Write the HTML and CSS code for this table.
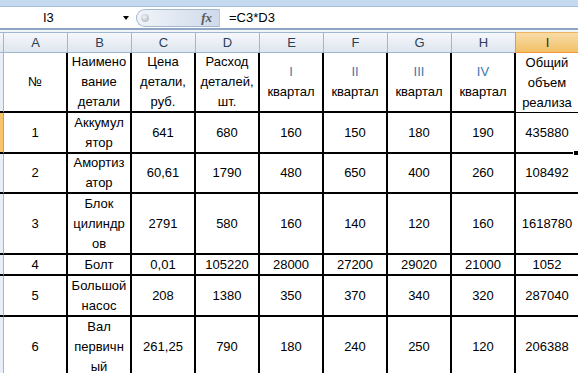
FILE: index.html
```
<!DOCTYPE html>
<html lang="ru">
<head>
<meta charset="utf-8">
<title>Excel</title>
<link rel="stylesheet" href="styles.css">
</head>
<body>
<div class="topband"></div>
<div class="fbar">
  <div class="namebox"><span class="nb-text">I3</span><span class="nb-arrow"></span></div>
  <div class="fx-cap"><span class="fx-dot"></span><span class="fx-label">fx</span></div>
  <div class="formula">=C3*D3</div>
</div>
<div class="fsep"></div>
<div class="gap"></div>
<div class="grid">
  <div class="ch corner"></div>
  <div class="ch">A</div><div class="ch">B</div><div class="ch">C</div><div class="ch">D</div><div class="ch">E</div><div class="ch">F</div><div class="ch">G</div><div class="ch presel">H</div><div class="ch sel">I</div>

  <div class="rh"></div>
  <div class="c">№</div>
  <div class="c">Наимено<br>вание<br>детали</div>
  <div class="c">Цена<br>детали,<br>руб.</div>
  <div class="c">Расход<br>деталей,<br>шт.</div>
  <div class="c"><span><span class="rn">I</span><br>квартал</span></div>
  <div class="c"><span><span class="rn">II</span><br>квартал</span></div>
  <div class="c"><span><span class="rn">III</span><br>квартал</span></div>
  <div class="c"><span><span class="rn">IV</span><br>квартал</span></div>
  <div class="c i2">Общий<br>объем<br>реализа</div>

  <div class="rh sel"></div>
  <div class="c">1</div><div class="c">Аккумул<br>ятор</div><div class="c">641</div><div class="c">680</div><div class="c">160</div><div class="c">150</div><div class="c">180</div><div class="c">190</div><div class="c i3">435880<span class="handle"></span></div>

  <div class="rh"></div>
  <div class="c">2</div><div class="c">Амортиз<br>атор</div><div class="c">60,61</div><div class="c">1790</div><div class="c">480</div><div class="c">650</div><div class="c">400</div><div class="c">260</div><div class="c">108492</div>

  <div class="rh"></div>
  <div class="c">3</div><div class="c">Блок<br>цилиндр<br>ов</div><div class="c">2791</div><div class="c">580</div><div class="c">160</div><div class="c">140</div><div class="c">120</div><div class="c">160</div><div class="c">1618780</div>

  <div class="rh"></div>
  <div class="c">4</div><div class="c">Болт</div><div class="c">0,01</div><div class="c">105220</div><div class="c">28000</div><div class="c">27200</div><div class="c">29020</div><div class="c">21000</div><div class="c">1052</div>

  <div class="rh"></div>
  <div class="c">5</div><div class="c">Большой<br>насос</div><div class="c">208</div><div class="c">1380</div><div class="c">350</div><div class="c">370</div><div class="c">340</div><div class="c">320</div><div class="c">287040</div>

  <div class="rh"></div>
  <div class="c">6</div><div class="c">Вал<br>первичн<br>ый</div><div class="c">261,25</div><div class="c">790</div><div class="c">180</div><div class="c">240</div><div class="c">250</div><div class="c">120</div><div class="c">206388</div>
</div>
</body>
</html>
```

FILE: styles.css
```
* { box-sizing: border-box; margin: 0; padding: 0; }
html, body { width: 578px; height: 373px; overflow: hidden; background: #fff; }
body { font-family: "Liberation Sans", Arial, sans-serif; font-size: 13px; color: #000; }

.topband { height: 7px; background: #c5d9f1; border-bottom: 1px solid #a8bdd6; }

.fbar { height: 21px; display: flex; align-items: center; background: #fff; }
.namebox { width: 136px; height: 100%; display: flex; align-items: center; }
.nb-text { margin-left: 43px; }
.nb-arrow { margin-left: auto; margin-right: 7px; width: 0; height: 0;
  border-left: 3.5px solid transparent; border-right: 3.5px solid transparent; border-top: 4px solid #000; }
.fx-cap { width: 84px; height: 18px; border: 1px solid #a3b7cf; border-right-color: #b7c6d9;
  border-radius: 9px 0 0 9px; background: linear-gradient(to right, #f1f4f9, #cfdaea);
  display: flex; align-items: center; justify-content: space-between; padding: 0 7px 0 4px; }
.fx-dot { width: 8px; height: 8px; border-radius: 50%;
  background: radial-gradient(circle at 40% 35%, #f2f3f5, #a4abb5); }
.fx-label { font-family: "Liberation Serif", serif; font-style: italic; font-weight: bold; font-size: 13px; color: #5a5a5a; }
.formula { padding-left: 9px; }

.fsep { height: 2px; background: #8ea6c2; }
.gap { height: 2px; background: #f1f5fa; }

.grid { display: grid; grid-template-columns: 4px repeat(9, 64px);
  grid-template-rows: 21px 60px 41px 40px 61px 21px 41px 61px; }

.ch { background: linear-gradient(#f5f7fb, #dfe6ef); border-top: 1px solid #9fb6cf;
  border-bottom: 1px solid #9eb6ce; border-right: 1px solid #9eb6ce;
  display: flex; align-items: center; justify-content: center; color: #2a3f5a; }
.ch.presel { border-right-color: #f29536; }
.ch.sel { background: linear-gradient(#f9dca8, #f2c066); border-top-color: #f0b45e; border-bottom-color: #f29536; color: #2c2c2c; }

.rh { background: #e9eff7; border-right: 1px solid #9eb6ce; border-bottom: 2px solid #000; }
.rh.sel { background: #f7c46c; border-right-color: #f29536; }

.c { border-right: 2px solid #000; border-bottom: 2px solid #000;
  display: flex; align-items: center; justify-content: center; text-align: center;
  line-height: 20px; white-space: nowrap; }
.c.i2 { border-bottom-width: 1px; }
.c.i3 { position: relative; }
.rn { color: #3c78b0; }
.handle { position: absolute; right: -1px; bottom: -4px; width: 6px; height: 6px;
  background: #000; border: 1px solid #fff; }
```
